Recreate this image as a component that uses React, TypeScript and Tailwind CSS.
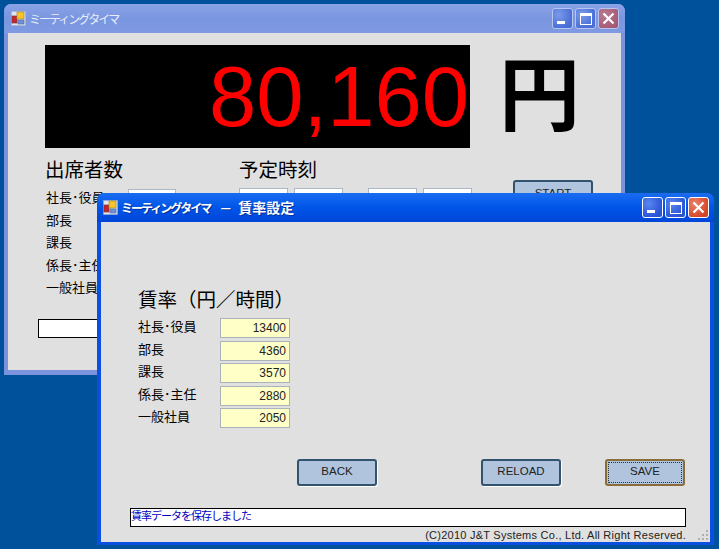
const font = "font-['Liberation_Sans','Noto_Sans_CJK_JP',sans-serif]";

function CaptionIcon() {
  return (
    <svg width="15" height="15" viewBox="0 0 15 15" className="shrink-0">
      <rect x="0.5" y="0.5" width="14" height="14" fill="#dfe6f2" stroke="#9fb0cc" strokeWidth="0.5" />
      <rect x="1" y="5" width="5" height="7" fill="#c8242c" stroke="#7a3540" strokeWidth="0.7" />
      <rect x="6" y="1" width="7" height="7" fill="#f6c52e" stroke="#b08a20" strokeWidth="0.7" />
      <rect x="7" y="9" width="6" height="4" fill="#6f8fd8" stroke="#5a6fa0" strokeWidth="0.7" />
    </svg>
  );
}

function CaptionButtons({ active }: { active: boolean }) {
  const border = active ? "border-white" : "border-[#b6c6ee]";
  const blue = active
    ? "bg-[radial-gradient(circle_at_30%_30%,#5b86ee,#2a55d8_70%,#2a50c8)]"
    : "bg-[radial-gradient(circle_at_30%_30%,#7b9ae8,#4a6fd8_70%,#4a6cd0)]";
  const red = active
    ? "bg-[radial-gradient(circle_at_30%_30%,#e8846a,#d8482a_70%,#c84020)]"
    : "bg-[radial-gradient(circle_at_30%_30%,#b87a90,#a85c78_70%,#a05470)]";
  const size = `w-[21px] h-[21px] rounded-[3px] border ${border} relative flex items-center justify-center`;
  return (
    <div className="flex gap-[2px]">
      <div className={`${size} ${blue}`}>
        <div className="absolute left-[4px] bottom-[4px] w-[8px] h-[3px] bg-white" />
      </div>
      <div className={`${size} ${blue}`}>
        <div className="w-[12px] h-[12px] border border-white border-t-[3px]" />
      </div>
      <div className={`${size} ${red}`}>
        <svg width="13" height="13" viewBox="0 0 13 13">
          <path d="M1.5 1.5 L11.5 11.5 M11.5 1.5 L1.5 11.5" stroke="white" strokeWidth="2.2" />
        </svg>
      </div>
    </div>
  );
}

function Btn({ label, focus }: { label: string; focus?: boolean }) {
  return (
    <div
      className={`w-[80px] h-[27px] rounded-[3px] border-2 bg-[#b0c4de] flex items-center justify-center pb-[1px] text-[11.5px] text-[#222] ${
        focus
          ? "border-[#8a6d3a] outline-1 outline-dotted outline-offset-[-4px] outline-[#333]"
          : "border-[#33526e] shadow-[1px_1px_0_#fff]"
      }`}
    >
      {label}
    </div>
  );
}

const rates: [string, string][] = [
  ["社長･役員", "13400"],
  ["部長", "4360"],
  ["課長", "3570"],
  ["係長･主任", "2880"],
  ["一般社員", "2050"],
];

const backRows = ["社長･役員", "部長", "課長", "係長･主任", "一般社員"];

function SpinStub({ w }: { w: string }) {
  return <div className={`${w} h-[24px] bg-white border border-[#a9b8c4]`} />;
}

export default function App() {
  return (
    <div className={`${font} relative w-[719px] h-[549px] overflow-hidden bg-[#00519c]`}>
      {/* Back window */}
      <div className="absolute left-[4px] top-[4px] w-[621px] h-[371px] rounded-t-[7px] bg-[#7b93dd] px-[4px] pb-[5px] flex flex-col">
        <div className="h-[29px] shrink-0 flex items-center -mx-[4px] px-[7px] rounded-t-[7px] bg-gradient-to-b from-[#8aa3e6] via-[#7a96e0] to-[#7f9ae2]">
          <CaptionIcon />
          <span className="ml-[3px] mt-[2px] text-[12px] tracking-[-2px] text-[#e8edf8] flex-1">ミーティングタイマ</span>
          <div className="mr-[-1px]">
            <CaptionButtons active={false} />
          </div>
        </div>
        <div className="flex-1 bg-[#e0e0e0] pl-[37px] pt-[12px] flex flex-col">
          <div className="flex items-start">
            <div className="w-[425px] h-[103px] bg-black flex items-center justify-end overflow-hidden">
              <span className="text-[#ff0000] text-[85px] leading-none mr-[1px]">80,160</span>
            </div>
            <span className="ml-[29px] mt-[5px] text-[81px] leading-[92px] font-bold text-black">円</span>
          </div>
          <div className="flex mt-[9px]">
            <div className="w-[194px]">
              <div className="text-[19.5px] leading-[26px] text-black">出席者数</div>
              <div className="relative mt-[4px] pl-[1px] flex flex-col">
                {backRows.map((r) => (
                  <div key={r} className="h-[22.6px] text-[13px] leading-[22px] text-black">
                    {r}
                  </div>
                ))}
              </div>
            </div>
            <div className="w-[274px]">
              <div className="text-[19.5px] leading-[26px] text-black">予定時刻</div>
              <div className="flex mt-[5px] gap-[6px]">
                <SpinStub w="w-[49px]" />
                <SpinStub w="w-[49px]" />
                <div className="w-[13px]" />
                <SpinStub w="w-[49px]" />
                <SpinStub w="w-[49px]" />
              </div>
            </div>
            <div className="mt-[23px]">
              <div className="w-[80px] h-[27px] rounded-[3px] border-2 border-[#33526e] bg-[#b0c4de] flex items-center justify-center text-[11.5px] text-[#222]">
                START
              </div>
            </div>
          </div>
          <div className="-ml-[7px] mt-[19px] w-[200px] h-[19px] bg-white border border-black" />
        </div>
      </div>
      <div className="absolute left-[128px] top-[189px] w-[48px] h-[10px] bg-white border border-[#a9b8c4]" />

      {/* Front window */}
      <div className="absolute left-[97px] top-[193px] w-[617px] h-[352px] rounded-t-[7px] bg-[#0a4fe0] px-[4px] pb-[4px] flex flex-col">
        <div className="h-[29px] shrink-0 flex items-center -mx-[4px] px-[6px] rounded-t-[7px] bg-gradient-to-b from-[#1a6cf0] via-[#0055e8] to-[#0046d8]">
          <CaptionIcon />
          <span className="ml-[3px] mt-[2px] text-white font-bold flex-1 flex items-center [text-shadow:1px_1px_0_#0030a0]">
            <span className="text-[12px] tracking-[-2px]">ミーティングタイマ</span>
            <span className="ml-[9px] text-[13px]">－</span>
            <span className="ml-[6px] text-[14px]">賃率設定</span>
          </span>
          <div className="mr-[-1px]">
            <CaptionButtons active />
          </div>
        </div>
        <div className="relative flex-1 bg-[#e0e0e0] pl-[37px] pt-[65px] flex flex-col">
          <div className="text-[19.5px] leading-[26px] text-black">賃率（円／時間）</div>
          <div className="mt-[5px] flex flex-col gap-[2.5px]">
            {rates.map(([n, v]) => (
              <div key={n} className="flex items-center h-[20px]">
                <span className="w-[82px] -mt-[2px] text-[13px] text-black">{n}</span>
                <div className="w-[70px] h-[20px] bg-[#ffffc8] border border-[#a8b4b8] text-right pr-[3px] text-[12px] leading-[18px] text-[#222]">
                  {v}
                </div>
              </div>
            ))}
          </div>
          <div className="flex mt-[31px]">
            <div className="ml-[159px]">
              <Btn label="BACK" />
            </div>
            <div className="ml-[104px]">
              <Btn label="RELOAD" />
            </div>
            <div className="ml-[44px]">
              <Btn label="SAVE" focus />
            </div>
          </div>
          <div className="-ml-[8px] mt-[22px] w-[556px] h-[19px] bg-white border border-black text-[11px] tracking-[-1px] leading-[15px] text-[#0000c0]">
            賃率データを保存しました
          </div>
          <div className="-ml-[8px] mt-[1px] w-[556px] text-right text-[11px] leading-[14px] tracking-[0.25px] text-[#222]">
            (C)2010 J&amp;T Systems Co., Ltd. All Right Reserved.
          </div>
          <svg width="12" height="12" viewBox="0 0 12 12" className="absolute right-[1px] bottom-[1px]">
            <g fill="#b0b0b0">
              <rect x="9" y="1" width="2" height="2" />
              <rect x="5" y="5" width="2" height="2" />
              <rect x="9" y="5" width="2" height="2" />
              <rect x="1" y="9" width="2" height="2" />
              <rect x="5" y="9" width="2" height="2" />
              <rect x="9" y="9" width="2" height="2" />
            </g>
          </svg>
        </div>
      </div>
    </div>
  );
}
